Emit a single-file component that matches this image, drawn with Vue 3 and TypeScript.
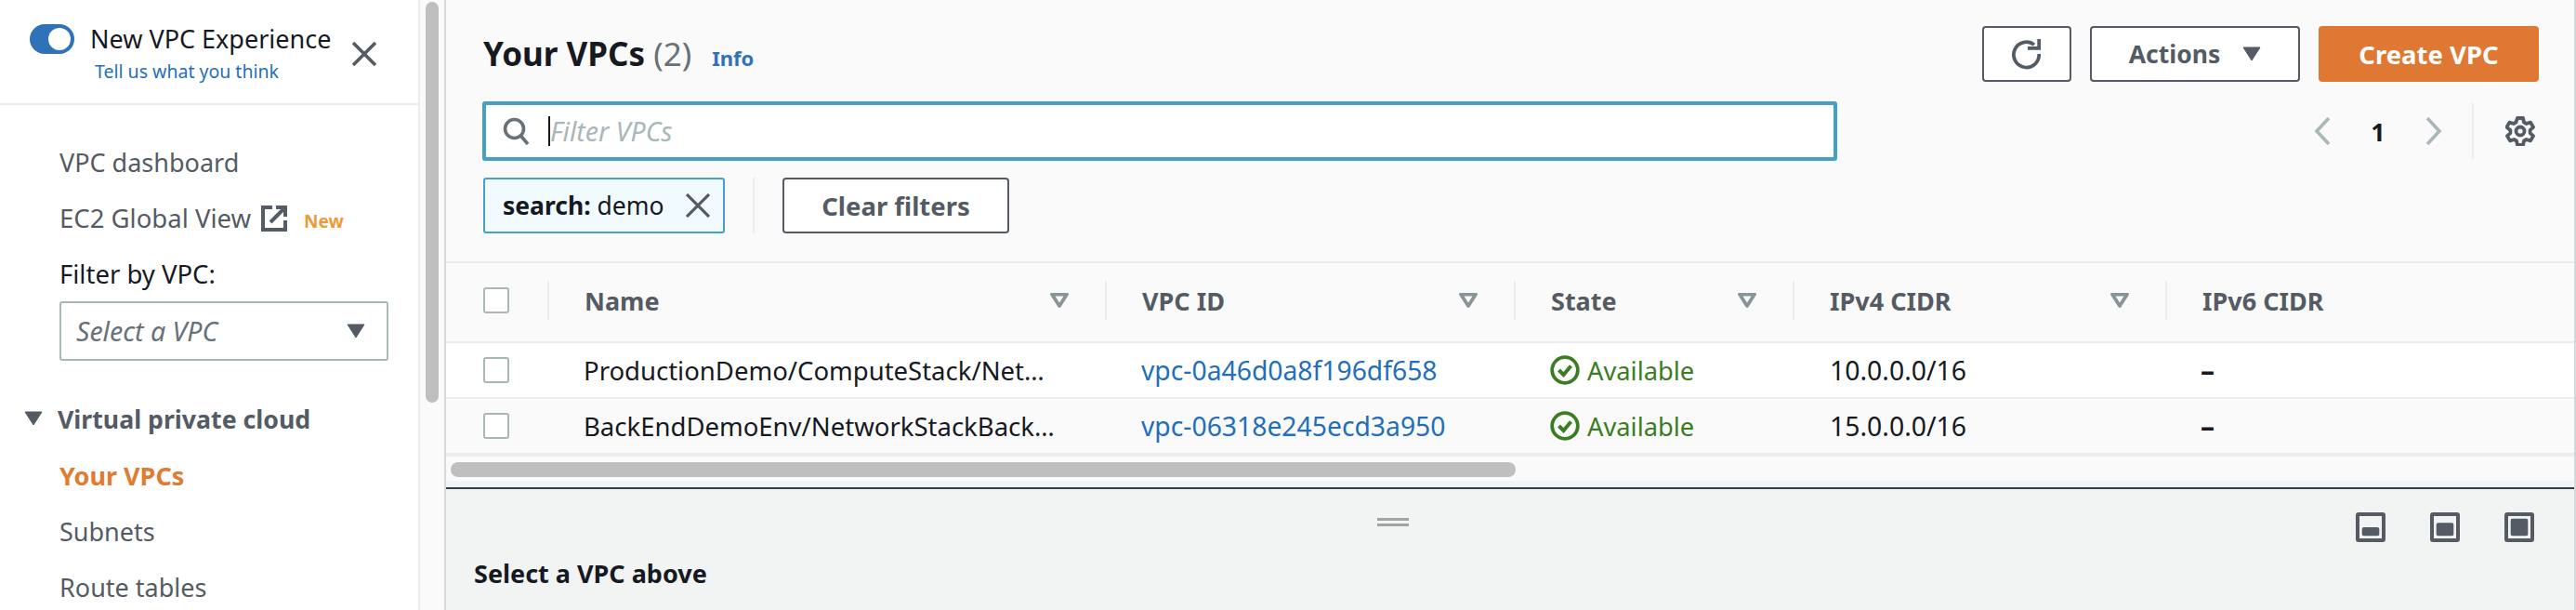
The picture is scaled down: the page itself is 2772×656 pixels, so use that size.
<script setup lang="ts">
interface Row { name: string; id: string; cidr: string; white: boolean }
const rows: Row[] = [
  { name: 'ProductionDemo/ComputeStack/Net…', id: 'vpc-0a46d0a8f196df658', cidr: '10.0.0.0/16', white: true },
  { name: 'BackEndDemoEnv/NetworkStackBack…', id: 'vpc-06318e245ecd3a950', cidr: '15.0.0.0/16', white: false },
]
const columns = [
  { label: 'Name', cls: 'c-name', filter: true },
  { label: 'VPC ID', cls: 'c-id', filter: true },
  { label: 'State', cls: 'c-state', filter: true },
  { label: 'IPv4 CIDR', cls: 'c-v4', filter: true },
  { label: 'IPv6 CIDR', cls: 'c-v6', filter: false },
]
const panelLevels = [9.3, 14, 18.6]
</script>

<template>
  <div class="page">
    <aside class="side">
      <div class="exp">
        <span class="toggle"><span class="knob"></span></span>
        <div class="exp-text">
          <div class="exp-title">New VPC Experience</div>
          <div class="exp-link">Tell us what you think</div>
        </div>
        <svg class="exp-close" viewBox="0 0 26 26"><path d="M1 1 25 25M25 1 1 25" stroke="#545b64" stroke-width="3.6" fill="none" /></svg>
      </div>
      <nav class="nav">
        <div class="nav-item first">VPC dashboard</div>
        <div class="nav-item ec2">
          <span>EC2 Global View</span>
          <svg class="ext" viewBox="0 0 28 28"><path d="M12 2H2v24h24V16" stroke="#545b64" stroke-width="4" fill="none" /><path d="M16 2h10v10M26 2 10 18" stroke="#545b64" stroke-width="4" fill="none" /></svg>
          <span class="new">New</span>
        </div>
        <div class="filter-label">Filter by VPC:</div>
        <div class="select">
          <span>Select a VPC</span>
          <svg class="caret" viewBox="0 0 20 16"><path d="M1 1h18L10 15z" fill="#545b64" stroke="#545b64" stroke-linejoin="round" /></svg>
        </div>
        <div class="group">
          <svg class="caret" viewBox="0 0 20 16"><path d="M1 1h18L10 15z" fill="#545b64" stroke="#545b64" stroke-linejoin="round" /></svg>
          <span>Virtual private cloud</span>
        </div>
        <div class="nav-item active">Your VPCs</div>
        <div class="nav-item">Subnets</div>
        <div class="nav-item">Route tables</div>
      </nav>
    </aside>
    <div class="track"><div class="thumb"></div></div>
    <main class="main">
      <section class="head">
        <div class="head-left">
          <div class="title-row">
            <h1 class="title">Your VPCs <span class="count">(2)</span></h1>
            <span class="info">Info</span>
          </div>
          <div class="search">
            <svg class="mag" viewBox="0 0 30 30"><circle cx="12.5" cy="12.5" r="10" stroke="#687078" stroke-width="3.6" fill="none" /><path d="M19.5 20 27 29" stroke="#687078" stroke-width="3.6" fill="none" /></svg>
            <span class="cursor"></span>
            <span class="placeholder">Filter VPCs</span>
          </div>
          <div class="tokens">
            <div class="token">
              <span><b>search:</b> demo</span>
              <svg class="token-x" viewBox="0 0 26 26"><path d="M1 1 25 25M25 1 1 25" stroke="#545b64" stroke-width="3.2" fill="none" /></svg>
            </div>
            <span class="tok-div"></span>
            <div class="btn clear">Clear filters</div>
          </div>
        </div>
        <div class="head-right">
          <div class="actions">
            <div class="btn refresh">
              <svg viewBox="0 0 34 34"><path d="M25.5 6.5A14.5 14.5 0 1 0 31 17" stroke="#545b64" stroke-width="4" fill="none" /><path d="M18 10.500h13V0" stroke="#545b64" stroke-width="4" fill="none" /></svg>
            </div>
            <div class="btn act">Actions
              <svg class="caret" viewBox="0 0 20 16"><path d="M1 1h18L10 15z" fill="#545b64" stroke="#545b64" stroke-linejoin="round" /></svg>
            </div>
            <div class="btn create">Create VPC</div>
          </div>
          <div class="pager">
            <svg class="chev" viewBox="0 0 18 30"><path d="M16 1 3 15l13 14" stroke="#aab7b8" stroke-width="3.6" fill="none" /></svg>
            <span class="page-no">1</span>
            <svg class="chev" viewBox="0 0 18 30"><path d="M2 1l13 14L2 29" stroke="#aab7b8" stroke-width="3.6" fill="none" /></svg>
            <span class="pager-div"></span>
            <svg class="gear" viewBox="0 0 32 32"><g fill="none" stroke="#545b64"><circle cx="16" cy="16" r="4.500" stroke-width="3.8" /><path stroke-width="3.8" stroke-linejoin="round" d="M13 2h6l1 4.500 2.600 1.500 4.400-1.400 3 5.200-3.400 3.100v3.200l3.400 3.100-3 5.200-4.400-1.400-2.600 1.500-1 4.500h-6l-1-4.500-2.600-1.500-4.400 1.400-3-5.200 3.400-3.100v-3.200L1.400 11.800l3-5.200L8.800 8l2.600-1.500z" /></g></svg>
          </div>
        </div>
      </section>

      <section class="table">
        <div class="tr thead">
          <div class="c-check"><span class="box"></span></div>
          <div v-for="c in columns" :key="c.label" class="th" :class="c.cls">
            <span>{{ c.label }}</span>
            <svg v-if="c.filter" class="funnel" viewBox="0 0 20 16"><path d="M2 1.500h16L10 14z" fill="none" stroke="#879596" stroke-width="3.8" stroke-linejoin="round" /></svg>
          </div>
        </div>
        <div v-for="r in rows" :key="r.id" class="tr tbody" :class="{ white: r.white }">
          <div class="c-check"><span class="box"></span></div>
          <div class="td c-name name">{{ r.name }}</div>
          <div class="td c-id link">{{ r.id }}</div>
          <div class="td c-state ok">
            <svg class="check" viewBox="0 0 32 32"><circle cx="16" cy="16" r="13.800" stroke="#3a7d22" stroke-width="3.8" fill="none" /><path d="M9.500 16l5 5 8-9.500" stroke="#3a7d22" stroke-width="4" fill="none" /></svg>
            <span>Available</span>
          </div>
          <div class="td c-v4 num">{{ r.cidr }}</div>
          <div class="td c-v6 dash">–</div>
        </div>
        <div class="hscroll"><div class="hthumb"></div></div>
      </section>

      <div class="strip"></div>
      <section class="panel">
        <div class="panel-top">
          <span class="grip"></span>
          <div class="levels">
            <svg v-for="h in panelLevels" :key="h" class="lvl" viewBox="0 0 32 32">
              <rect x="2" y="2" width="28" height="28" rx="1" fill="none" stroke="#545b64" stroke-width="4" />
              <rect x="6.700" :y="25.300 - h" width="18.600" :height="h" rx="2" fill="#545b64" />
            </svg>
          </div>
        </div>
        <div class="panel-title">Select a VPC above</div>
      </section>
    </main>
  </div>
</template>

<style>
html, body { margin: 0; background: #fff; }
</style>

<style scoped>
.page {
  display: flex;
  width: 2772px;
  height: 656px;
  overflow: hidden;
  font-family: "Noto Sans", "Open Sans", sans-serif;
  font-size: 27px;
  color: #16191f;
  background: #fff;
}
.caret { width: 20px; height: 16px; flex: none; }

/* Sidebar */
.side { width: 450px; flex: none; }
.exp {
  box-sizing: border-box;
  height: 113px;
  border-bottom: 2px solid #eaeded;
  display: flex;
  align-items: flex-start;
  padding: 26px 0 0 32px;
}
.toggle {
  width: 48px;
  height: 32px;
  border-radius: 16px;
  background: #2e73b8;
  position: relative;
  flex: none;
}
.knob {
  position: absolute;
  left: 20px;
  top: 4px;
  width: 24px;
  height: 24px;
  border-radius: 50%;
  background: #fff;
}
.exp-text { margin-left: 17px; width: 282px; }
.exp-title { font-size: 27px; line-height: 32px; white-space: nowrap; }
.exp-link { font-size: 19.500px; line-height: 26px; color: #1f6fbb; margin: 6px 0 0 5px; }
.exp-close { width: 26px; height: 26px; margin-top: 19px; flex: none; }
.nav { padding: 0 32px 0 64px; color: #545b64; }
.nav-item { height: 60px; line-height: 60px; }
.first { margin-top: 32px; }
.ec2 { display: flex; align-items: center; font-size: 27.500px; }
.ext { width: 28px; height: 28px; margin-left: 11px; }
.new { font-size: 19px; font-weight: 700; color: #ec9a3b; margin: 5px 0 0 18px; }
.filter-label { color: #16191f; height: 60px; line-height: 60px; font-size: 27.500px; }
.select {
  box-sizing: border-box;
  height: 64px;
  margin-top: -1px;
  border: 2px solid #aab7b8;
  border-radius: 3px;
  padding: 0 23px 0 16px;
  display: flex;
  align-items: center;
  justify-content: space-between;
  font-style: italic;
  font-size: 28.500px;
  color: #687078;
}
.group {
  display: flex;
  align-items: center;
  gap: 16px;
  margin: 32px 0 0 -38px;
  height: 60px;
  font-weight: 700;
  font-size: 26.700px;
}
.active { color: #e07b32; font-weight: 700; margin-top: 2px; }

/* Scroll track */
.track {
  width: 30px;
  flex: none;
  box-sizing: border-box;
  background: #fafafa;
  border-left: 2px solid #eaeded;
  border-right: 2px solid #d5dbdb;
  padding: 2px 6px 0;
}
.thumb { height: 431px; border-radius: 8px; background: #bfbfbf; }

/* Main */
.main {
  flex: 1;
  box-sizing: border-box;
  display: flex;
  flex-direction: column;
  min-width: 0;
  background: #fafafa;
  border-right: 2px solid #d5dbdb;
}
.head {
  height: 283px;
  box-sizing: border-box;
  border-bottom: 2px solid #eaeded;
  padding: 28px 38px 0 39px;
  display: flex;
  justify-content: space-between;
}
.head-left { width: 1458px; }
.title-row { display: flex; align-items: baseline; height: 62px; margin-left: 1px; }
.title { margin: 0; font-size: 35px; font-weight: 700; line-height: 60px; }
.count { font-weight: 400; color: #687078; }
.info { color: #2e73b8; font-size: 22px; font-weight: 700; margin-left: 22px; }
.search {
  box-sizing: border-box;
  height: 64px;
  margin-top: 19px;
  border: 4px solid #44a0c8;
  border-radius: 3px;
  background: #fff;
  display: flex;
  align-items: center;
  padding-left: 18px;
}
.mag { width: 30px; height: 30px; }
.cursor { width: 2px; height: 32px; background: #16191f; margin-left: 19px; }
.placeholder { font-style: italic; color: #aab7b8; margin-left: 0; font-size: 28.500px; }
.tokens { display: flex; align-items: stretch; margin: 18px 0 0 1px; height: 60px; }
.token {
  box-sizing: border-box;
  width: 260px;
  border: 2px solid #44a0c8;
  border-radius: 3px;
  background: #f1faff;
  display: flex;
  align-items: center;
  justify-content: space-between;
  padding: 0 14px 0 19px;
  font-size: 26.500px;
}
.token-x { width: 26px; height: 26px; }
.tok-div { width: 2px; background: #eaeded; margin: 0 30px; }
.btn {
  box-sizing: border-box;
  height: 60px;
  border: 2px solid #545b64;
  border-radius: 4px;
  background: #fff;
  color: #545b64;
  font-weight: 700;
  display: flex;
  align-items: center;
  justify-content: center;
}
.clear { width: 244px; font-size: 27.500px; }
.head-right { display: flex; flex-direction: column; align-items: flex-end; }
.actions { display: flex; gap: 20px; }
.refresh { width: 96px; }
.refresh svg { width: 32px; height: 34px; }
.act { width: 226px; gap: 24px; font-size: 26.500px; }
.create { width: 237px; background: #df7832; border-color: #df7832; color: #fff; font-size: 27.500px; }
.pager { display: flex; align-items: center; height: 60px; margin-top: 23px; padding-right: 4px; }
.chev { width: 18px; height: 30px; flex: none; }
.page-no { width: 102px; text-align: center; font-weight: 700; }
.pager-div { width: 2px; height: 60px; background: #eaeded; margin-left: 32px; }
.gear { width: 32px; height: 32px; margin-left: 34px; }

/* Table */
.table { display: flex; flex-direction: column; }
.tr { display: flex; align-items: center; border-bottom: 2px solid #eaeded; }
.thead { height: 86px; padding-bottom: 4px; box-sizing: border-box; }
.tbody { height: 60px; box-sizing: border-box; }
.white { background: #fff; }
.c-check { width: 109px; box-sizing: border-box; padding-left: 40px; display: flex; flex: none; }
.box { width: 28px; height: 28px; box-sizing: border-box; border: 2px solid #aab7b8; border-radius: 3px; background: #fff; }
.th, .td { box-sizing: border-box; flex: none; }
.th {
  display: flex;
  align-items: center;
  justify-content: space-between;
  height: 42px;
  border-left: 2px solid #eaeded;
  padding-left: 38px;
  font-weight: 700;
  color: #545b64;
}
.funnel { width: 20px; height: 16px; margin-right: 39px; }
.td { padding-left: 39px; }
.c-name { width: 600px; }
.c-id { width: 440px; }
.c-state { width: 300px; }
.c-v4 { width: 401px; }
.c-v6 { flex: 1; }
.name { font-size: 27.500px; white-space: nowrap; }
.link { color: #1f6fbb; font-size: 28.300px; }
.ok { color: #3a7d22; display: flex; align-items: center; gap: 8px; font-size: 27.300px; }
.check { width: 32px; height: 32px; flex: none; }
.num { font-size: 28.400px; padding-left: 40px; }
.dash { font-size: 30px; font-weight: 700; padding-left: 38px; }
.hscroll { height: 28px; box-sizing: border-box; padding: 6px 0 0 5px; border-top: 2px solid #eaeded; background: #fafafa; }
.hthumb { width: 1146px; height: 16px; border-radius: 8px; background: #bfbfbf; }

/* Bottom panel */
.strip { height: 7px; background: #f2f3f3; }
.panel { flex: 1; background: #f2f3f3; border-top: 2px solid #2f3d4a; }
.panel-top { position: relative; height: 73px; }
.grip {
  position: absolute;
  left: 1002px;
  top: 31px;
  width: 34px;
  height: 9px;
  box-sizing: border-box;
  border-top: 3px solid #a3a3a3;
  border-bottom: 3px solid #a3a3a3;
}
.levels { position: absolute; right: 43px; top: 25px; display: flex; gap: 48px; }
.lvl { width: 32px; height: 32px; }
.panel-title { font-weight: 700; font-size: 27px; line-height: 36px; margin-left: 30px; }
</style>
